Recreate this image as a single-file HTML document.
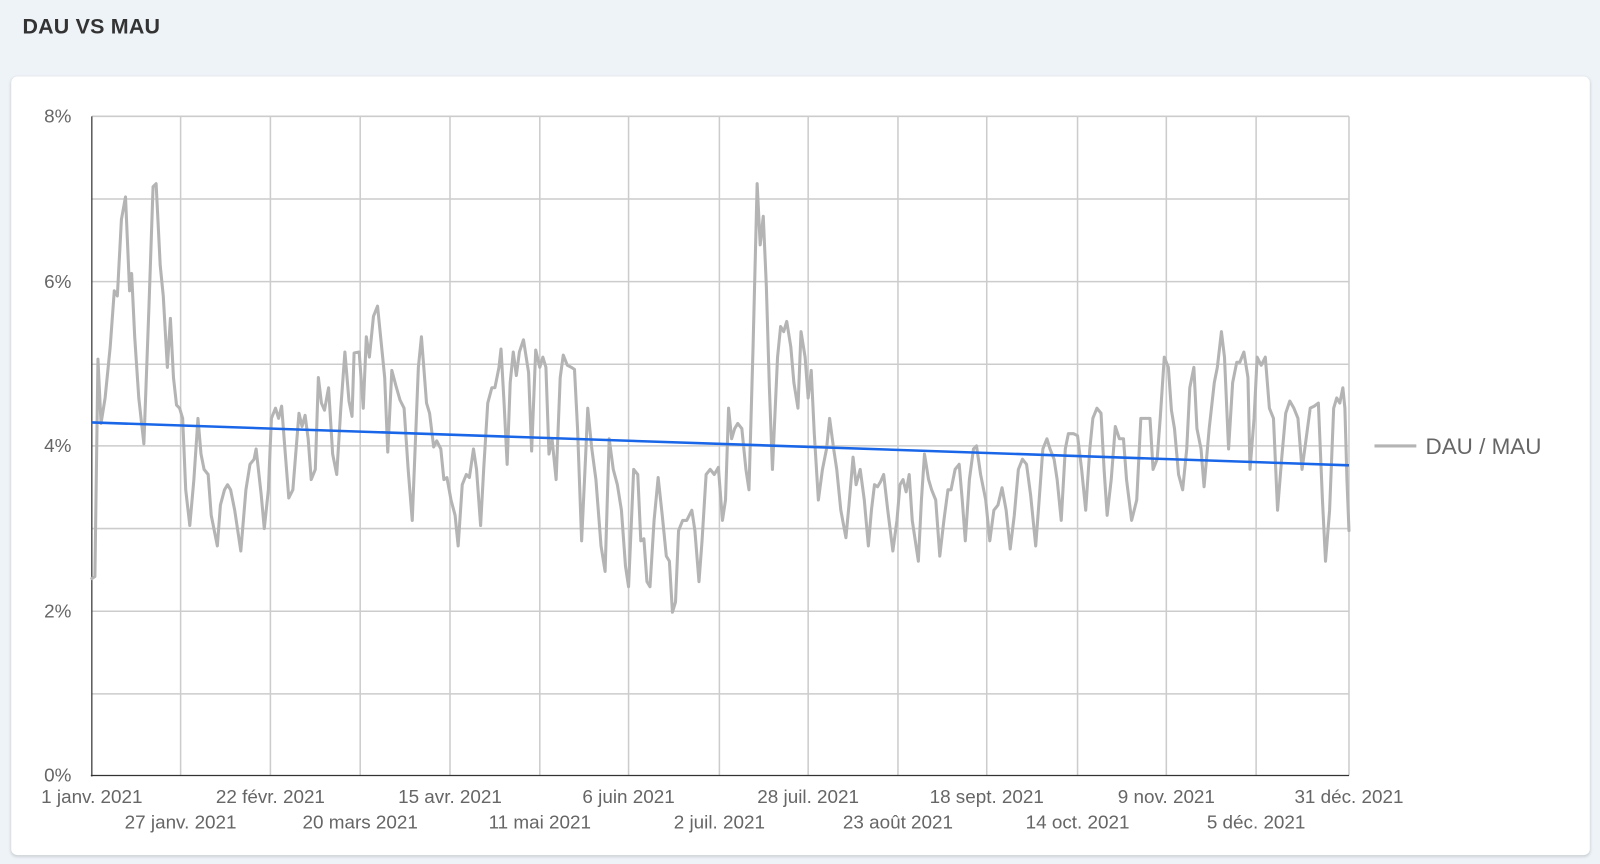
<!DOCTYPE html>
<html><head><meta charset="utf-8"><style>
html,body{margin:0;padding:0;width:1600px;height:864px;background:#eef3f8;overflow:hidden;font-family:"Liberation Sans",sans-serif}
#w{position:absolute;left:0;top:0;width:1568px;height:847px;transform:scale(1.020408);transform-origin:0 0}
.t{position:absolute;left:22px;top:15px;font-size:21px;font-weight:bold;color:#333;letter-spacing:0.2px}
.card{position:absolute;left:11px;top:75px;width:1547px;height:763px;background:#fff;border-radius:6px;box-shadow:0 1px 3px rgba(0,0,0,.18)}
svg{position:absolute;left:0;top:0}
</style></head><body><div id="w">
<div class="t">DAU VS MAU</div>
<div class="card"></div>
<svg width="1568" height="847" font-family="Liberation Sans, sans-serif" font-size="18.5" fill="#666">
<g stroke="#ccc" stroke-width="1.5">
<line x1="90" y1="114" x2="1322" y2="114"/><line x1="90" y1="195" x2="1322" y2="195"/><line x1="90" y1="276" x2="1322" y2="276"/><line x1="90" y1="357" x2="1322" y2="357"/><line x1="90" y1="437" x2="1322" y2="437"/><line x1="90" y1="518" x2="1322" y2="518"/><line x1="90" y1="599" x2="1322" y2="599"/><line x1="90" y1="680" x2="1322" y2="680"/>
<line x1="177" y1="114" x2="177" y2="760"/><line x1="265" y1="114" x2="265" y2="760"/><line x1="353" y1="114" x2="353" y2="760"/><line x1="441" y1="114" x2="441" y2="760"/><line x1="529" y1="114" x2="529" y2="760"/><line x1="616" y1="114" x2="616" y2="760"/><line x1="705" y1="114" x2="705" y2="760"/><line x1="792" y1="114" x2="792" y2="760"/><line x1="880" y1="114" x2="880" y2="760"/><line x1="967" y1="114" x2="967" y2="760"/><line x1="1056" y1="114" x2="1056" y2="760"/><line x1="1143" y1="114" x2="1143" y2="760"/><line x1="1231" y1="114" x2="1231" y2="760"/><line x1="1322" y1="114" x2="1322" y2="760"/>
</g>
<line x1="90" y1="114" x2="90" y2="761" stroke="#333" stroke-width="1.2"/>
<line x1="89" y1="760" x2="1322" y2="760" stroke="#333" stroke-width="1.2"/>
<g text-anchor="end"><text x="70" y="120">8%</text><text x="70" y="282">6%</text><text x="70" y="443">4%</text><text x="70" y="605">2%</text><text x="70" y="766">0%</text></g>
<g text-anchor="middle">
<text x="90" y="787">1 janv. 2021</text><text x="265" y="787">22 févr. 2021</text><text x="441" y="787">15 avr. 2021</text><text x="616" y="787">6 juin 2021</text><text x="792" y="787">28 juil. 2021</text><text x="967" y="787">18 sept. 2021</text><text x="1143" y="787">9 nov. 2021</text><text x="1322" y="787">31 déc. 2021</text>
<text x="177" y="812">27 janv. 2021</text><text x="353" y="812">20 mars 2021</text><text x="529" y="812">11 mai 2021</text><text x="705" y="812">2 juil. 2021</text><text x="880" y="812">23 août 2021</text><text x="1056" y="812">14 oct. 2021</text><text x="1231" y="812">5 déc. 2021</text>
</g>
<polyline fill="none" stroke="#b4b4b4" stroke-width="3" stroke-linejoin="round" stroke-linecap="round" points="90,567 93,565 96,352 99,415 103,390 108,340 112,285 115,290 119,215 123,193 127,285 129,268 132,330 136,390 141,435 146,300 150,183 153,180 157,260 160,290 164,360 167,312 170,370 173,397 176,400 179,410 182,480 186,515 190,470 194,410 197,445 200,460 204,465 207,505 213,535 216,495 220,480 223,475 226,480 230,500 236,540 241,480 245,455 249,450 251,440 256,485 259,518 263,480 266,410 270,400 273,410 276,398 280,450 283,488 287,480 291,430 293,405 296,418 299,407 302,430 305,470 309,460 312,370 315,395 318,402 322,380 326,445 330,465 334,400 338,345 342,393 345,408 347,346 352,345 356,400 359,330 362,350 366,310 370,300 374,340 377,370 380,443 384,363 388,378 392,392 396,400 400,460 404,510 410,360 413,330 418,395 421,405 425,438 428,432 432,440 435,470 438,468 442,490 446,505 449,535 453,475 457,465 460,468 464,440 467,460 471,515 474,460 478,395 482,380 485,380 489,360 491,342 494,395 497,455 500,375 503,345 506,368 509,345 513,333 518,365 521,442 525,343 529,360 532,350 535,360 538,445 541,430 545,470 549,370 552,348 556,358 560,360 563,362 566,420 570,530 574,445 576,400 580,440 584,470 589,535 593,560 597,430 601,460 605,475 609,500 613,555 616,575 621,460 625,465 628,530 631,528 634,570 637,575 641,510 645,468 649,505 653,545 656,550 659,600 662,590 665,520 669,510 673,510 678,500 681,520 685,570 688,530 692,465 696,460 700,465 704,458 708,510 711,490 714,400 717,430 720,420 723,415 727,420 731,460 734,480 738,340 742,180 745,240 748,212 751,280 754,380 757,460 762,350 765,320 768,325 771,315 775,340 778,375 782,400 785,325 789,350 792,390 795,363 798,425 802,490 806,460 810,440 813,410 817,440 820,460 824,500 829,527 832,495 836,448 839,475 843,460 847,490 851,535 854,500 857,475 860,477 863,472 866,465 870,500 875,540 879,510 882,475 885,470 888,482 891,465 894,510 900,550 903,490 906,445 910,470 913,480 917,490 921,545 925,510 929,480 932,480 936,460 940,455 943,490 946,530 950,470 954,440 957,437 961,465 966,490 970,530 974,500 978,495 982,478 986,500 990,538 994,505 998,460 1002,450 1006,455 1010,485 1015,535 1018,495 1022,440 1026,430 1029,440 1033,450 1036,470 1040,510 1044,440 1047,425 1052,425 1056,427 1060,460 1064,500 1068,440 1071,410 1075,400 1079,405 1082,460 1085,505 1089,470 1093,418 1097,430 1101,430 1104,470 1109,510 1114,490 1118,410 1123,410 1127,410 1130,460 1134,450 1137,410 1141,350 1145,360 1148,402 1151,420 1155,465 1159,480 1163,440 1166,380 1170,360 1173,420 1177,440 1180,477 1185,420 1190,375 1193,360 1197,325 1200,350 1204,440 1208,375 1212,355 1215,355 1219,345 1223,370 1225,460 1229,410 1232,350 1236,358 1240,350 1244,400 1248,410 1252,500 1256,450 1260,405 1264,393 1268,400 1272,410 1276,460 1280,430 1284,400 1288,398 1292,395 1296,490 1299,550 1303,500 1307,400 1310,390 1313,395 1316,380 1318,400 1320,470 1322,520"/>
<line x1="90" y1="414" x2="1322" y2="456" stroke="#1a66e8" stroke-width="2.5"/>
<line x1="1347" y1="437" x2="1388" y2="437" stroke="#b4b4b4" stroke-width="3"/>
<text x="1397" y="445" font-size="22">DAU / MAU</text>
</svg>
</div></body></html>
